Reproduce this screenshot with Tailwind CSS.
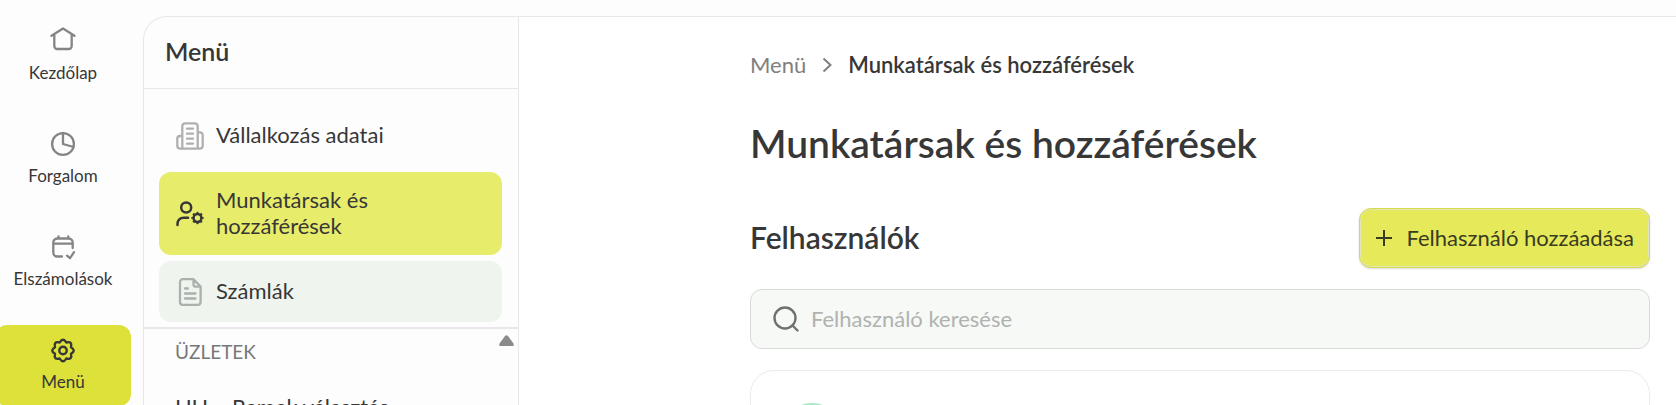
<!DOCTYPE html>
<html lang="hu">
<head>
    <meta charset="UTF-8">
    <meta name="viewport" content="width=device-width, initial-scale=1.0">
    <script src="https://cdn.jsdelivr.net/npm/@tailwindcss/browser@4"></script>
    <title>Munkatársak és hozzáférések</title>
</head>
<body class="flex h-screen overflow-hidden bg-[#fdfdfd] font-[Lato,sans-serif] text-[#373737]">
    <!-- Bal oldali navigáció -->
    <nav class="-ml-[5px] flex w-[136px] shrink-0 flex-col gap-[22px] pt-4 text-[17px] leading-5">
        <a href="#" class="flex h-[81px] shrink-0 flex-col items-center gap-[6px] rounded-xl pt-[9px]">
            <svg class="size-8 text-[#858585]" viewBox="0 0 32 32" fill="none" stroke="currentColor" stroke-width="2.3" stroke-linecap="round" stroke-linejoin="round"><path d="M4.500 10.800 16 3.500l11.500 7.300M7.300 9.500V21a3 3 0 0 0 3 3h11.400a3 3 0 0 0 3-3V9.500"/></svg>
            <span>Kezdőlap</span>
        </a>
        <a href="#" class="flex h-[81px] shrink-0 flex-col items-center gap-[6px] rounded-xl pt-[9px]">
            <svg class="size-8 text-[#858585]" viewBox="0 0 32 32" fill="none" stroke="currentColor" stroke-width="2.3" stroke-linecap="round" stroke-linejoin="round"><circle cx="16" cy="16" r="10.900"/><path d="M16 5v11l10.500 3"/></svg>
            <span>Forgalom</span>
        </a>
        <a href="#" class="flex h-[81px] shrink-0 flex-col items-center gap-[6px] rounded-xl pt-[9px]">
            <svg class="size-8 text-[#858585]" viewBox="0 0 32 32" fill="none" stroke="currentColor" stroke-width="2.3" stroke-linecap="round" stroke-linejoin="round"><path d="M15 25.500h-4.700a4 4 0 0 1-4-4V11.500a4 4 0 0 1 4-4h11.400a4 4 0 0 1 4 4V17M6.300 12.700h19.400M11.500 5.500v2M21.300 5.500v2M20 24.700l3 2.500 4-6"/></svg>
            <span>Elszámolások</span>
        </a>
        <a href="#" class="flex h-[81px] shrink-0 flex-col items-center gap-[6px] rounded-xl bg-[#dde139] pt-[9px]" aria-current="page">
            <svg class="size-8" viewBox="-16 -16.500 32 32" fill="none" stroke="currentColor" stroke-width="2.400" stroke-linejoin="round"><path d="M8-3.300Q13.600 0 8 3.300 9.600 9.600 3.300 8 0 13.600-3.300 8-9.600 9.600-8 3.300-13.600 0-8-3.300-9.600-9.600-3.300-8 0-13.600 3.300-8 9.600-9.600 8-3.300z"/><circle r="3.700"/></svg>
            <span>Menü</span>
        </a>
    </nav>

    <div class="mt-4 ml-3 flex min-w-0 flex-1 overflow-hidden rounded-tl-3xl border-t border-l border-[#e8e8e8]">
        <!-- Menü panel -->
        <aside class="flex w-[375px] shrink-0 flex-col border-r border-[#e8e8e8]">
            <h2 class="h-[72px] shrink-0 border-b border-[#e8e8e8] pl-[21px] text-[25px] leading-[68px] font-semibold">Menü</h2>
            <div class="flex flex-col gap-[6px] border-b-2 border-[#e8e8e8] pt-4 pr-4 pb-[5px] pl-[15px] text-[22px] leading-[26px]">
                <a href="#" class="flex min-h-[61px] items-center gap-3 rounded-xl pr-[60px] pl-[17px]">
                    <svg class="size-7 shrink-0 text-[#b0b0b0]" viewBox="0 0 28 28" fill="none" stroke="currentColor" stroke-width="2.300" stroke-linecap="round" stroke-linejoin="round"><path d="M6.300 26.700V4a2.700 2.700 0 0 1 2.700-2.700h10A2.700 2.700 0 0 1 21.700 4v22.700M6 14H4a2.700 2.700 0 0 0-2.700 2.700V24A2.700 2.700 0 0 0 4 26.700h20a2.700 2.700 0 0 0 2.700-2.700V13a2.700 2.700 0 0 0-2.700-2.700h-2M11 6.700h6M11 11.700h6M11 16.700h6M11 21.700h6"/></svg>
                    <span class="pb-px">Vállalkozás adatai</span>
                </a>
                <a href="#" class="flex min-h-[83px] items-center gap-3 rounded-xl bg-[#e8ec6b] pr-[60px] pl-[17px]" aria-current="page">
                    <svg class="size-7 shrink-0" viewBox="0 0 28 28" fill="none" stroke="currentColor" stroke-width="2.500" stroke-linecap="round"><circle cx="10.200" cy="7.500" r="5"/><path d="M1.500 25v-1.300a6 6 0 0 1 6-6h4.500"/><circle cx="21.500" cy="18" r="3.900"/><circle cx="21.500" cy="18" r="5.200" pathLength="16" stroke-width="1.900" stroke-linecap="butt" stroke-dasharray="1 1" stroke-dashoffset=".5"/></svg>
                    <span class="pb-px">Munkatársak és hozzáférések</span>
                </a>
                <a href="#" class="flex min-h-[61px] items-center gap-3 rounded-xl bg-[#eff4ef] pr-[60px] pl-[17px]">
                    <svg class="size-7 shrink-0 text-[#adb0ad]" viewBox="0 0 28 28" fill="none" stroke="currentColor" stroke-width="2.300" stroke-linecap="round" stroke-linejoin="round"><path d="M17 1.200H6.800A2.800 2.800 0 0 0 4 4v20a2.800 2.800 0 0 0 2.800 2.800h15a2.800 2.800 0 0 0 2.800-2.800V8.500L17.500 1.200v5a2.500 2.500 0 0 0 2.500 2.500h4.500M9 10.500h3M9 15.500h10.500M9 20.500h10.500"/></svg>
                    <span class="pb-px">Számlák</span>
                </a>
            </div>
            <div class="flex justify-between pt-[6px] pr-1 pl-[31px]">
                <h3 class="pt-[5px] text-[19px] leading-6 text-[#777]">ÜZLETEK</h3>
                <svg class="h-[11px] w-[15px] text-[#8b8b8b]" viewBox="0 0 15 11" fill="currentColor"><path d="M6 1Q7.500-.5 9 1l5.500 7.500Q15.500 11 13.500 11h-12Q-.5 11 .5 8.500z"/></svg>
            </div>
            <a href="#" class="pt-[30px] pl-[31px] text-[22px] leading-[26px] whitespace-nowrap">HU – Remek választás</a>
        </aside>

        <!-- Tartalom -->
        <main class="min-w-0 flex-1 bg-white pt-[34px] pr-[26px] pl-[231px]">
            <nav class="flex h-7 items-center gap-4 text-[22px] leading-7">
                <a href="#" class="text-[#808080]">Menü</a>
                <svg class="h-4 w-[10px] text-[#808080]" viewBox="0 0 10 16" fill="none" stroke="currentColor" stroke-width="2"><path d="M1.500 1.500 8.500 8l-7 6.500"/></svg>
                <span class="font-semibold">Munkatársak és hozzáférések</span>
            </nav>
            <h1 class="mt-10 text-[39px] leading-12 font-semibold">Munkatársak és hozzáférések</h1>
            <div class="mt-[41px] flex items-center justify-between">
                <h2 class="pb-0.5 text-[30px] leading-9 font-semibold">Felhasználók</h2>
                <button type="button" class="flex h-[60px] items-center gap-[15px] rounded-xl border border-[#d6db4c] bg-[#e5e95a] pr-[15px] pl-4 text-[22px] leading-7 text-[#393c22] shadow-[inset_0_0_0_1px_#e2e5b8,0_1px_2px_rgb(0_0_0/0.15)]">
                    <svg class="size-4" viewBox="0 0 16 16" fill="none" stroke="currentColor" stroke-width="2"><path d="M8 0v16M0 8h16"/></svg>
                    Felhasználó hozzáadása
                </button>
            </div>
            <label class="mt-[21px] flex h-[60px] items-center gap-3 rounded-xl border border-[#d8dad8] bg-[#f7f9f7] px-[22px]">
                <svg class="size-[26px] shrink-0 text-[#707070]" viewBox="0 0 26 26" fill="none" stroke="currentColor" stroke-width="2.400" stroke-linecap="round"><circle cx="12" cy="12" r="10.500"/><path d="m19.500 19.500 5 5"/></svg>
                <input type="text" aria-label="Felhasználó keresése" placeholder="Felhasználó keresése" class="min-w-0 flex-1 bg-transparent text-[22px] leading-7 outline-none placeholder:text-[#b0b2b0]">
            </label>
            <div class="mt-[21px] h-[120px] rounded-3xl border border-[#ebebeb] px-[29px] pt-8">
                <div class="size-16 rounded-full bg-[#a9e8c5]"></div>
            </div>
        </main>
    </div>
</body>
</html>
